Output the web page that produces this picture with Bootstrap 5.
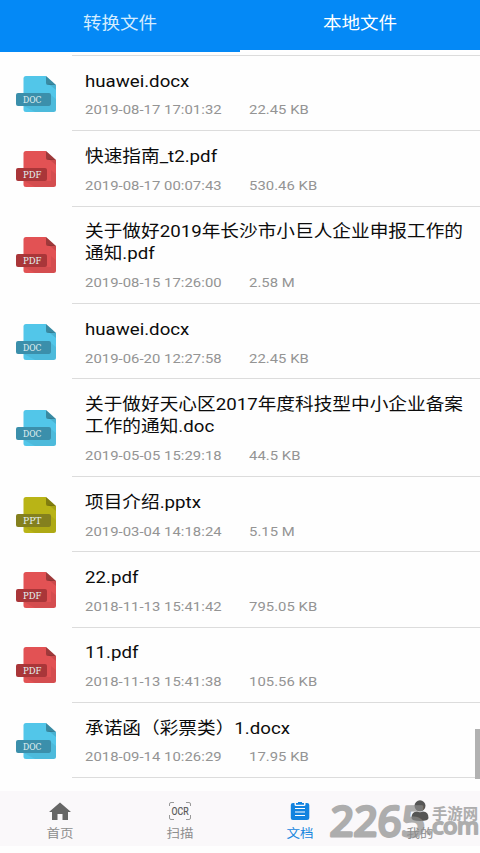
<!DOCTYPE html>
<html lang="zh-CN">
<head>
<meta charset="utf-8">
<meta name="viewport" content="width=device-width, initial-scale=1">
<title>本地文件</title>
<link href="https://cdn.jsdelivr.net/npm/bootstrap@5.3.0/dist/css/bootstrap.min.css" rel="stylesheet">
<style>
body{font-family:Roboto,"Noto Sans CJK SC",sans-serif;background:#fefefe;width:480px;height:853px;overflow:hidden}
.top-tabs{height:52px;background:#0489f6}
.top-tab{height:52px;padding-top:12px;color:#d3ecff;border:0}
.top-tab.active{color:#fff;border-bottom:2.5px solid #fff}
.wide{display:inline-block;transform:scaleX(1.125);transform-origin:0 50%;white-space:nowrap}
.wide-c{display:inline-block;transform:scaleX(1.125);white-space:nowrap}
.tab-label{font-size:16.5px;line-height:24px}
.files{height:739px;padding-top:3px}
.file-row{height:75.3px}
.file-row.tall{height:97.6px}
.file-icon{width:72px;padding:0 0 0 15px}
.file-body{border-bottom:1px solid #dcdcdc;padding:14.6px 0 0 12.8px}
.files-start{height:1px;margin-left:72px;background:#dcdcdc}
.file-name{font-size:16.6px;line-height:22px;color:#0c0c0c}
.file-meta{font-size:13.2px;line-height:18px;color:#949494;margin-top:8.9px}
.file-date{width:163.8px}
.file-meta .wide{letter-spacing:.04px}
.bottom-bar{height:55px;background:#faf8fa}
.bar-item{color:#8e8e8e;padding-top:9px}
.bar-item.active{color:#1686de}
.bar-label{font-size:12px;line-height:17px;margin-top:4px}
.scroll-thumb{position:absolute;right:0;top:729px;width:5px;height:50px;background:#b1b1b1}
.stamp{position:absolute;left:320px;top:790px}
</style>
<script src="https://cdn.jsdelivr.net/npm/bootstrap@5.3.0/dist/js/bootstrap.bundle.min.js"></script>
</head>
<body class="position-relative d-flex flex-column">
<svg width="0" height="0" class="position-absolute" aria-hidden="true">
<defs>
<symbol id="sheet" viewBox="0 0 42 38">
<path fill="currentColor" d="M11 1H31L41 10V34.500Q41 37 38.500 37H11Q8.500 37 8.500 34.500V3.500Q8.500 1 11 1Z"/>
<path fill="#000" opacity=".06" d="M36 20L41 24V34.500Q41 37 38.500 37H20L9 31H36Z"/>
<path fill="#000" opacity=".1" d="M33 8.500L41 15V10Z"/>
<path fill="#000" opacity=".3" d="M31 1L41 10H33Q31 10 31 8Z"/>
</symbol>
</defs>
</svg>
<nav class="top-tabs d-flex text-center flex-shrink-0">
<div class="top-tab w-50"><span class="wide-c tab-label">转换文件</span></div>
<div class="top-tab active w-50"><span class="wide-c tab-label">本地文件</span></div>
</nav>
<main class="files flex-shrink-0" id="files"><div class="files-start"></div></main>
<footer class="bottom-bar d-flex text-center flex-shrink-0">
<div class="bar-item w-25 d-flex flex-column align-items-center">
<svg width="24" height="22" viewBox="0 0 24 22"><path fill="#666" d="M12 2.500L1 12H4V20H9.500V14H14.500V20H20V12H23Z"/></svg>
<span class="wide-c bar-label">首页</span></div>
<div class="bar-item w-25 d-flex flex-column align-items-center">
<svg width="24" height="22" viewBox="0 0 24 22"><path fill="none" stroke="#999" d="M1.500 6V4Q1.500 2.500 3 2.500H6M18 2.500H21Q22.500 2.500 22.500 4V6M22.500 15V18Q22.500 19.500 21 19.500H18M6 19.500H3Q1.500 19.500 1.500 18V15"/><text x="3.500" y="14.700" font-size="10.500" textLength="17" lengthAdjust="spacingAndGlyphs" fill="#555" stroke="#555" stroke-width=".2">OCR</text></svg>
<span class="wide-c bar-label">扫描</span></div>
<div class="bar-item active w-25 d-flex flex-column align-items-center">
<svg width="24" height="22" viewBox="0 0 24 22"><path fill="#1283df" d="M5 3H6.500V4.500Q6.500 6 8 6H16Q17.500 6 17.500 4.500V3H19Q21.300 3 21.300 5V18Q21.300 20 19 20H5Q2.800 20 2.800 18V5Q2.800 3 5 3Z"/><path fill="#1283df" d="M8 3H10V2H14V3H16V4.800H8Z"/><path stroke="#fff" stroke-width="1.200" d="M7 8.500H17M7 12H17M7 15.500H17"/></svg>
<span class="wide-c bar-label">文档</span></div>
<div class="bar-item w-25 d-flex flex-column align-items-center">
<svg width="24" height="22" viewBox="0 0 24 22"><g fill="#555"><circle cx="12" cy="5.800" r="5.500"/><path d="M3.500 18Q3.500 11.500 9 11.500Q12 13 15 11.500Q20.500 11.500 20.500 18Q20.500 21 12 21Q3.500 21 3.500 18Z"/></g></svg>
<span class="wide-c bar-label">我的</span></div>
</footer>
<div class="scroll-thumb"></div>
<svg class="stamp" width="160" height="60" viewBox="0 0 160 60">
<g fill="#8a8a8a" stroke="#8a8a8a" stroke-linejoin="round" opacity=".68">
<text x="12" y="46" font-family="Open Sans" font-weight="400" font-size="41" stroke-width="3.200" textLength="95" lengthAdjust="spacingAndGlyphs" transform="skewX(-3)">2265</text>
<text x="112" y="28.500" font-family="Noto Sans CJK SC" font-weight="700" font-size="14.500" stroke-width=".1" textLength="46" lengthAdjust="spacingAndGlyphs">手游网</text>
<text x="106" y="44" font-family="Open Sans" font-weight="400" font-size="22" stroke-width="2.200" textLength="53" lengthAdjust="spacingAndGlyphs">.com</text>
</g>
</svg>
<script>
const kinds={DOC:['#52c6e9','#3b8fab',35],PDF:['#e25254','#a93639',31],PPT:['#b9b416','#84801e',35]};
const rows=[
['DOC',['huawei.docx'],'2019-08-17 17:01:32','22.45 KB'],
['PDF',['快速指南_t2.pdf'],'2019-08-17 00:07:43','530.46 KB'],
['PDF',['关于做好2019年长沙市小巨人企业申报工作的','通知.pdf'],'2019-08-15 17:26:00','2.58 M'],
['DOC',['huawei.docx'],'2019-06-20 12:27:58','22.45 KB'],
['DOC',['关于做好天心区2017年度科技型中小企业备案','工作的通知.doc'],'2019-05-05 15:29:18','44.5 KB'],
['PPT',['项目介绍.pptx'],'2019-03-04 14:18:24','5.15 M'],
['PDF',['22.pdf'],'2018-11-13 15:41:42','795.05 KB'],
['PDF',['11.pdf'],'2018-11-13 15:41:38','105.56 KB'],
['DOC',['承诺函（彩票类）1.docx'],'2018-09-14 10:26:29','17.95 KB']];
document.getElementById('files').insertAdjacentHTML('beforeend',rows.map(([k,n,d,s])=>{
const [c,b,w]=kinds[k];
return `<div class="file-row d-flex${n.length>1?' tall':''}"><div class="file-icon d-flex align-items-center flex-shrink-0"><svg width="42" height="38" viewBox="0 0 42 38"><use href="#sheet" color="${c}"/><rect x="1" y="18" width="${w}" height="13" rx="2" fill="${b}"/><text x="8" y="28" font-family="DejaVu Serif" font-size="9" textLength="18.500" lengthAdjust="spacingAndGlyphs" fill="#e4f2f3">${k}</text></svg></div><div class="file-body flex-grow-1"><div class="file-name"><span class="wide">${n.join('<br>')}</span></div><div class="file-meta d-flex"><div class="file-date"><span class="wide">${d}</span></div><div><span class="wide">${s}</span></div></div></div></div>`}).join(''));
</script>
</body>
</html>
